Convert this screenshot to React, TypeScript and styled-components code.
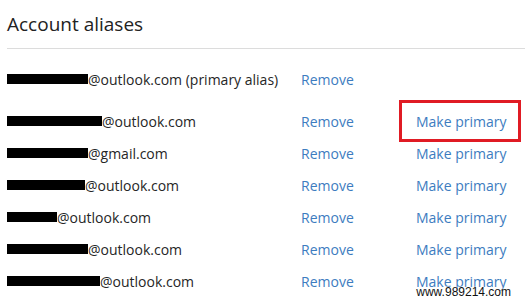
import React from "react";
import styled, { createGlobalStyle } from "styled-components";

const GlobalStyle = createGlobalStyle`
  html, body {
    margin: 0;
    padding: 0;
    background: #ffffff;
  }
  body {
    font-family: "Open Sans", "Noto Sans", "Liberation Sans", sans-serif;
    color: #262626;
  }
`;

interface Alias {
  hidden: number;
  domain: string;
  primary?: boolean;
  highlight?: boolean;
}

const aliases: Alias[] = [
  { hidden: 81, domain: "@outlook.com", primary: true },
  { hidden: 95, domain: "@outlook.com", highlight: true },
  { hidden: 81, domain: "@gmail.com" },
  { hidden: 78, domain: "@outlook.com" },
  { hidden: 50, domain: "@outlook.com" },
  { hidden: 81, domain: "@outlook.com" },
  { hidden: 93, domain: "@outlook.com" },
];

const App: React.FC = () => {
  return (
    <Page>
      <GlobalStyle />
      <Title>Account aliases</Title>
      <Divider />
      <List>
        {aliases.map((a, i) => (
          <Row key={i} $first={i === 0}>
            <Email>
              <Redacted $width={a.hidden} />
              {a.domain}
              {a.primary && " (primary alias)"}
            </Email>
            <Link>Remove</Link>
            {!a.primary &&
              (a.highlight ? (
                <Highlight>
                  <Link>Make primary</Link>
                </Highlight>
              ) : (
                <Link>Make primary</Link>
              ))}
          </Row>
        ))}
      </List>
      <Watermark>www.989214.com</Watermark>
    </Page>
  );
};

const Page = styled.div`
  position: relative;
  width: 525px;
  height: 299px;
  overflow: hidden;
  padding-left: 7px;
  box-sizing: border-box;
`;

const Title = styled.h1`
  margin: 0;
  padding-top: 11px;
  height: 48px;
  box-sizing: border-box;
  font-size: 19px;
  font-weight: 400;
  line-height: 26px;
  color: #222;
`;

const Divider = styled.div`
  height: 1px;
  background: #dcdcdc;
  margin-bottom: 14px;
`;

const List = styled.ul`
  list-style: none;
  margin: 0;
  padding: 0;
`;

const Row = styled.li<{ $first?: boolean }>`
  display: grid;
  grid-template-columns: 294px 115px auto;
  align-items: center;
  height: 32px;
  margin-bottom: ${(p) => (p.$first ? "10px" : "0")};
  font-size: 14px;
`;

const Email = styled.span`
  display: flex;
  align-items: center;
  color: #262626;
  white-space: nowrap;
`;

const Redacted = styled.span<{ $width: number }>`
  display: inline-block;
  width: ${(p) => p.$width}px;
  height: 10px;
  background: #000;
`;

const Link = styled.span`
  color: #3d7cc0;
  white-space: nowrap;
`;

const Highlight = styled.div`
  box-sizing: border-box;
  margin: -5px 0 -5px -17px;
  width: 122px;
  height: 42px;
  border: 3px solid #e01b24;
  display: flex;
  align-items: center;
  padding-left: 14px;
`;

const Watermark = styled.div`
  position: absolute;
  right: 14px;
  bottom: 0;
  font-family: "Liberation Sans", Arial, sans-serif;
  font-size: 12px;
  color: #111;
  text-shadow: 0 0 2px #fff, 0 0 2px #fff;
`;

export default App;
